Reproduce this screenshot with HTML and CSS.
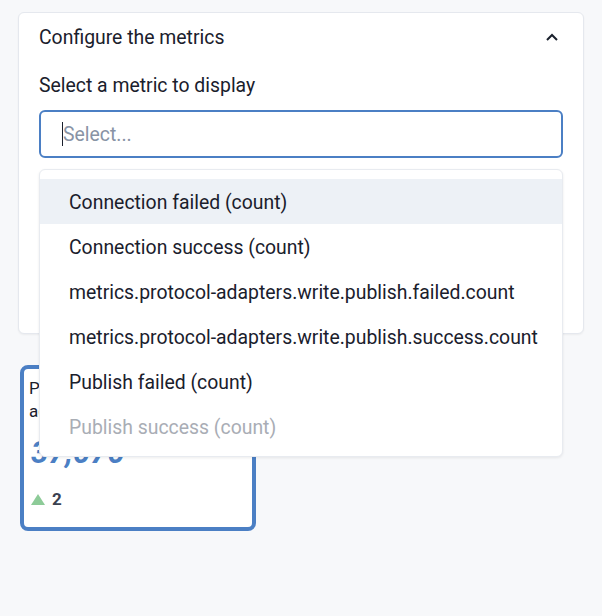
FILE: index.html
```html
<!DOCTYPE html>
<html>
<head>
<meta charset="utf-8">
<link rel="stylesheet" href="styles.css">
</head>
<body>
<div class="page">
  <section class="config-card">
    <div class="config-header">
      <span class="config-title">Configure the metrics</span>
      <svg class="chevron" width="14" height="10" viewBox="0 0 14 10"><polyline points="2,8 7,3 12,8" fill="none" stroke="#1a202c" stroke-width="2"/></svg>
    </div>
    <div class="config-panel">
      <label class="field-label">Select a metric to display</label>
      <div class="select-wrap">
        <div class="select-input"><span class="caret"></span><span class="placeholder">Select...</span></div>
        <ul class="menu">
          <li class="menu-item active">Connection failed (count)</li>
          <li class="menu-item">Connection success (count)</li>
          <li class="menu-item">metrics.protocol-adapters.write.publish.failed.count</li>
          <li class="menu-item">metrics.protocol-adapters.write.publish.success.count</li>
          <li class="menu-item">Publish failed (count)</li>
          <li class="menu-item disabled">Publish success (count)</li>
        </ul>
      </div>
    </div>
  </section>
  <div class="stat-card">
    <div class="stat-label">Publish success (count) adapters</div>
    <div class="stat-number">37,070</div>
    <div class="stat-help"><span class="tri"></span><span class="delta">2</span></div>
  </div>
</div>
</body>
</html>
```
FILE: styles.css
```css
html, body { margin: 0; padding: 0; }
body {
  background: #f7f8fa;
  font-family: Roboto, "Liberation Sans", sans-serif;
  color: #1a202c;
  width: 602px;
  height: 616px;
  overflow: hidden;
}
.page { padding: 12px 18px 0 18px; }
.config-card {
  background: #fff;
  border: 1px solid #e5e8ee;
  border-radius: 6px;
  box-shadow: 0 1px 2px rgba(0,0,0,0.05);
  height: 322px;
  box-sizing: border-box;
  width: 566px;
}
.config-header {
  height: 50px;
  display: flex;
  align-items: center;
  justify-content: space-between;
  padding: 0 24px 0 20px;
}
.config-title { font-size: 19.4px; line-height: 24px; }
.chevron { display: block; margin-top: -2px; }
.config-panel { padding: 11px 20px 0 20px; }
.field-label { display: block; font-size: 19.4px; line-height: 24px; margin-bottom: 12px; }
.select-wrap { position: relative; }
.select-input {
  height: 48px;
  box-sizing: border-box;
  border: 2px solid #4b7fc4;
  border-radius: 6px;
  display: flex;
  align-items: center;
  padding-left: 21px;
  font-size: 19.4px;
}
.caret { width: 1px; height: 24px; background: #1a202c; }
.placeholder { color: #8893a5; }
.menu {
  position: absolute;
  top: 59px;
  left: 0;
  right: 0;
  margin: 0;
  padding: 9px 0 7px 0;
  list-style: none;
  background: #fff;
  border: 1px solid #e8ebf0;
  border-radius: 6px;
  box-shadow: 0 1px 3px rgba(0,0,0,0.08);
  z-index: 5;
}
.menu-item {
  height: 45px;
  display: flex;
  align-items: center;
  padding-left: 29px;
  font-size: 19.4px;
  padding-top: 1px;
  box-sizing: border-box;
}
.menu-item.active { background: #edf1f6; }
.menu-item.disabled { color: #a9adb5; }
.stat-card {
  margin-top: 31px;
  margin-left: 2px;
  width: 236px;
  height: 166px;
  box-sizing: border-box;
  border: 4px solid #4b7fc4;
  border-radius: 8px;
  background: #fff;
  padding: 8px 5px;
}
.stat-label { font-size: 17px; line-height: 23px; }
.stat-number {
  font-size: 31px;
  font-weight: 700;
  font-style: italic;
  color: #4b7fc4;
  line-height: 36px;
  margin-top: 12px;
  padding-left: 2px;
}
.stat-help { display: flex; align-items: center; margin-top: 18px; gap: 7px; padding-left: 2px; }
.tri {
  width: 0; height: 0;
  border-left: 7px solid transparent;
  border-right: 7px solid transparent;
  border-bottom: 11px solid #8dcb98;
}
.delta { font-size: 17px; font-weight: 700; color: #3a4150; }
```
